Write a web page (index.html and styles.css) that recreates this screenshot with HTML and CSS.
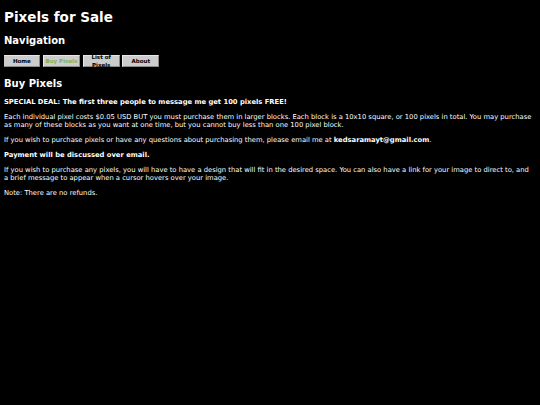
FILE: index.html
```html
<!DOCTYPE html>
<html>
<head>
<meta charset="utf-8">
<title>Pixels for Sale</title>
<link rel="stylesheet" href="styles.css">
</head>
<body>
<h1 class="title">Pixels for Sale</h1>
<h2 class="heading">Navigation</h2>
<nav class="nav">
  <a class="btn" href="#">Home</a>
  <a class="btn active" href="#">Buy Pixels</a>
  <a class="btn" href="#">List of Pixels</a>
  <a class="btn" href="#">About</a>
</nav>
<h2 class="heading">Buy Pixels</h2>
<p class="strong">SPECIAL DEAL: The first three people to message me get 100 pixels FREE!</p>
<p>Each individual pixel costs $0.05 USD BUT you must purchase them in larger blocks. Each block is a 10x10 square, or 100 pixels in total. You may purchase as many of these blocks as you want at one time, but you cannot buy less than one 100 pixel block.</p>
<p>If you wish to purchase pixels or have any questions about purchasing them, please email me at <b>kedsaramayt@gmail.com</b>.</p>
<p class="strong">Payment will be discussed over email.</p>
<p>If you wish to purchase any pixels, you will have to have a design that will fit in the desired space. You can also have a link for your image to direct to, and a brief message to appear when a cursor hovers over your image.</p>
<p>Note: There are no refunds.</p>
</body>
</html>
```
FILE: styles.css
```css
html { background: #000; }
body {
  margin: 4px;
  background: #000;
  color: #fff;
  font-family: "DejaVu Sans", Verdana, sans-serif;
  font-size: 6.77px;
  line-height: 8px;
}
.title {
  font-size: 13.5px;
  line-height: 16px;
  margin: 5px 0 10px;
}
.heading {
  font-size: 10px;
  line-height: 12px;
  margin: 0 0 8px;
}
.nav {
  display: flex;
  gap: 2.7px;
  margin: 0 0 11px -0.7px;
}
.btn {
  display: flex;
  flex-direction: column;
  justify-content: center;
  box-sizing: border-box;
  width: 37px;
  height: 12px;
  background: #cccccc;
  border: 1px solid;
  border-color: #e8e8e8 #8a8a8a #8a8a8a #e8e8e8;
  color: #000;
  font-size: 5.5px;
  font-weight: bold;
  line-height: 7.5px;
  text-align: center;
  text-decoration: none;
  padding-top: 1px;
}
.btn.active { color: #7fb04f; }
p {
  margin: 0 0 7px;
  padding-right: 2px;
}
.strong { font-weight: bold; }
```
